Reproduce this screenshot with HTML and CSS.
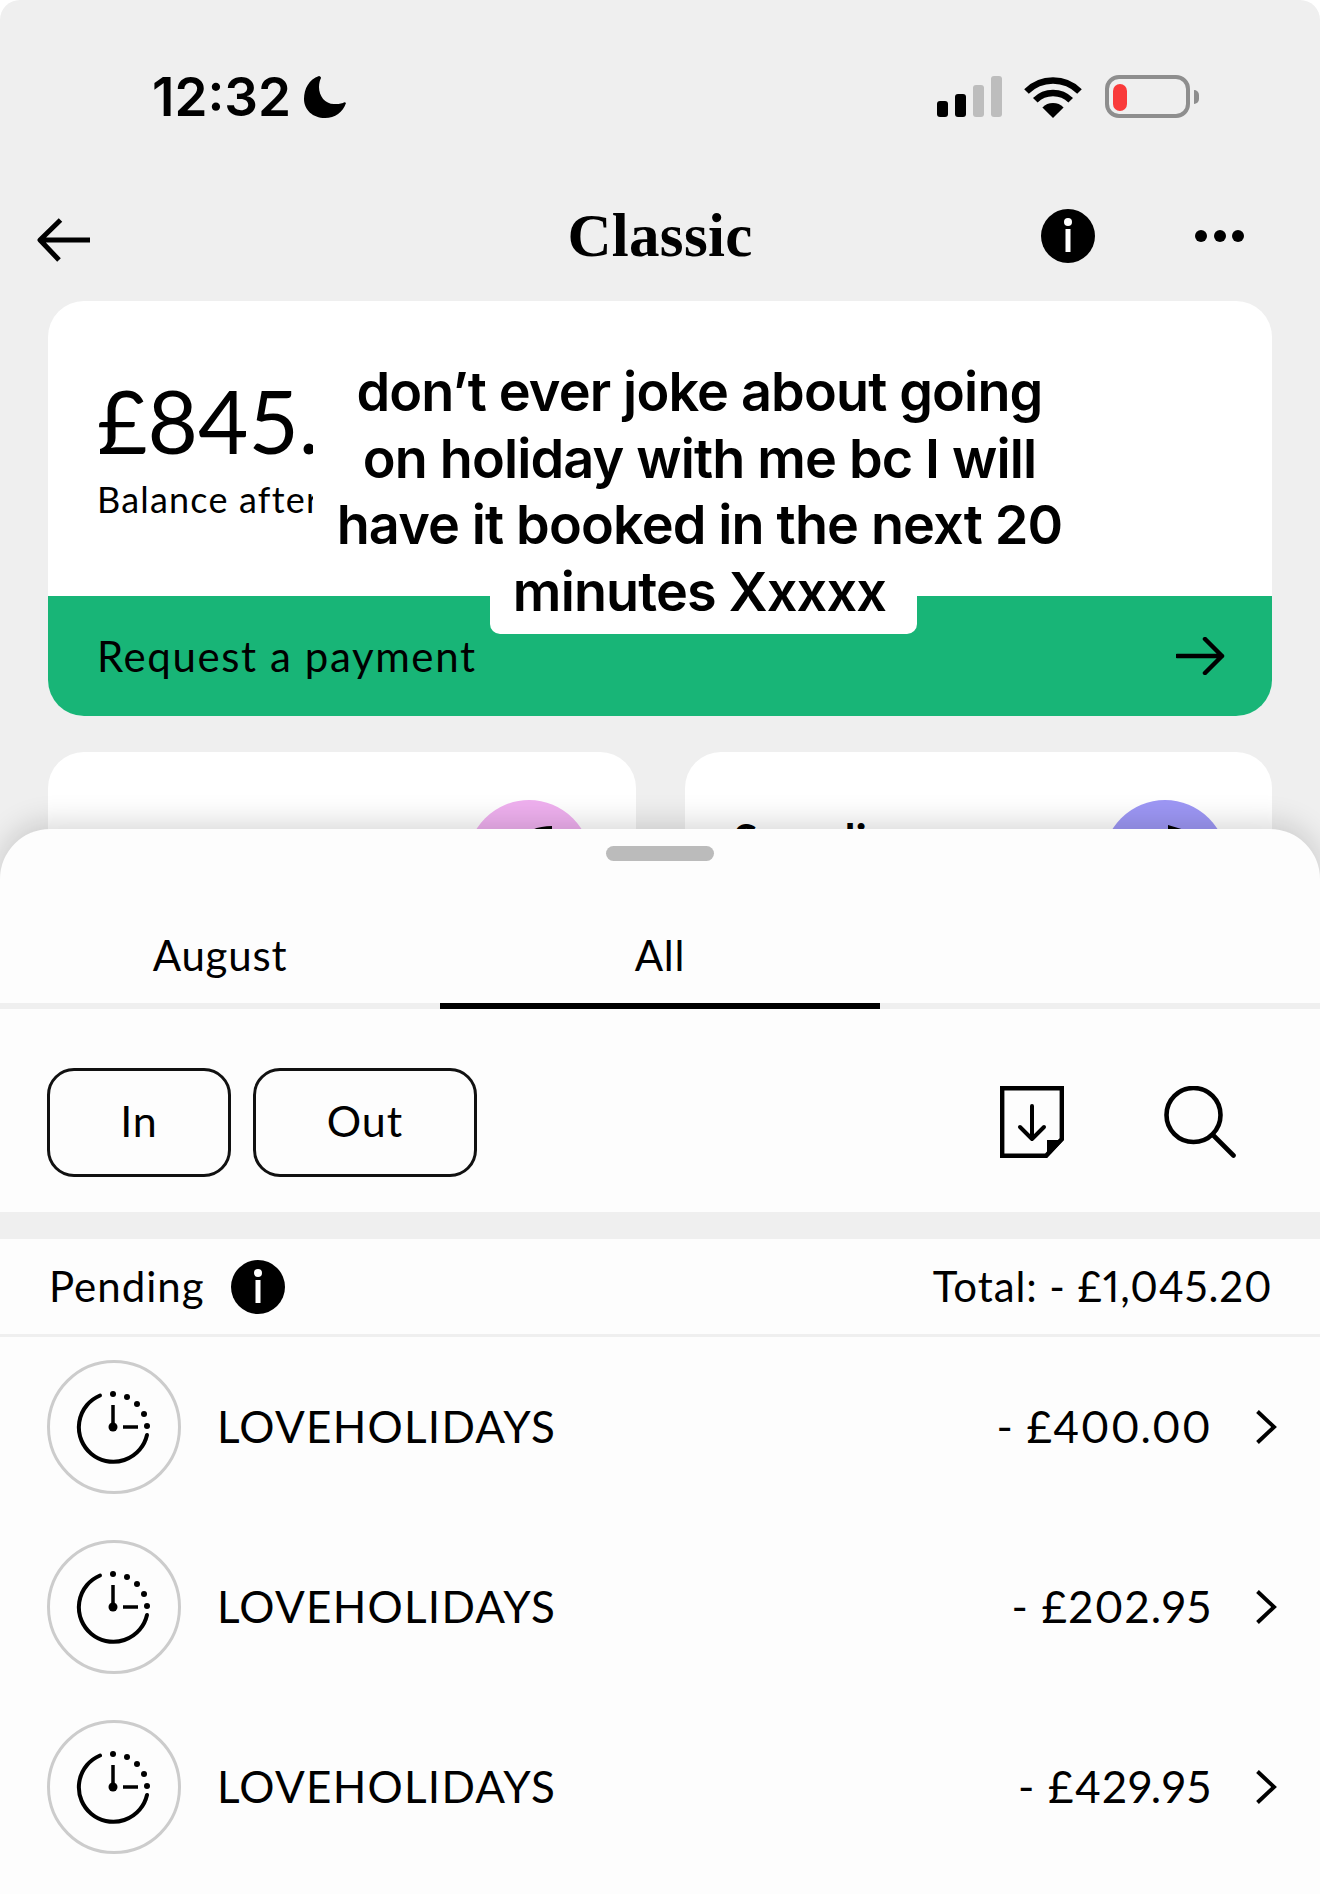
FILE: index.html
```html
<!DOCTYPE html>
<html lang="en">
<head>
  <meta charset="UTF-8">
  <title>Classic</title>
  <link rel="stylesheet" href="styles.css">
</head>
<body>
  <svg class="defs" aria-hidden="true">
    <symbol id="info" viewBox="0 0 54 54">
      <circle cx="27" cy="27" r="27" fill="#000"/>
      <circle cx="27" cy="13" r="4" fill="#fff"/>
      <rect x="24.5" y="20" width="5" height="23" fill="#fff"/>
    </symbol>
    <symbol id="clock" viewBox="0 0 80 80">
      <path d="M26 8.5A34.5 34.5 0 1 0 73 48" fill="none" stroke="#000" stroke-width="4" stroke-linecap="round"/>
      <circle cx="39" cy="7" r="3"/>
      <circle cx="53" cy="10" r="3"/>
      <circle cx="63" cy="17" r="3"/>
      <circle cx="70" cy="27" r="3"/>
      <circle cx="73" cy="39" r="3"/>
      <path d="M39 18V40M49 40H64" stroke="#000" stroke-width="3.5"/>
      <circle cx="39" cy="40" r="4.5"/>
    </symbol>
    <symbol id="chevron" viewBox="0 0 22 36">
      <path d="M2.5 2.5L19 18L2.5 33.5" fill="none" stroke="#000" stroke-width="4"/>
    </symbol>
  </svg>

  <div class="page">
    <div class="status">
      <span class="time">12:32</span>
      <svg class="moon" width="42" height="42" viewBox="0 0 42 42"><path d="M15 0C5 3 0 13 0 23C0 34 9 42 21 42C31 42 39 36 42 27C41 26 40 26 39 27C36 28 33 28 30 28C21 28 15 20 15 11C15 7 16 4 17 2C17 1 16 0 15 0Z"/></svg>
      <div class="signal">
        <i class="bar on b1"></i><i class="bar on b2"></i><i class="bar b3"></i><i class="bar b4"></i>
      </div>
      <svg class="wifi" width="58" height="42" viewBox="0 0 58 42">
        <path d="M29 42L18.4 31.4A15 15 0 0 1 39.6 31.4Z"/>
        <path d="M11.3 24.3A25 25 0 0 1 46.7 24.3M2.5 15.5A37.5 37.5 0 0 1 55.5 15.5" fill="none" stroke="#000" stroke-width="6.5"/>
      </svg>
      <div class="battery"><i class="level"></i></div>
      <i class="nub"></i>
    </div>

    <div class="header">
      <div class="header-left">
        <svg class="back" width="53" height="44" viewBox="0 0 53 44"><path d="M53 22H3M23.5 2L3 22L22 42" fill="none" stroke="#000" stroke-width="5" stroke-linejoin="round"/></svg>
      </div>
      <h1>Classic</h1>
      <div class="header-right">
        <svg class="icon-info"><use href="#info"/></svg>
        <div class="dots"><i></i><i></i><i></i></div>
      </div>
    </div>

    <div class="balance-card">
      <div class="balance-top">
        <div class="amount">£845.</div>
        <div class="amount-label">Balance after</div>
      </div>
      <div class="request">
        <span>Request a payment</span>
        <svg width="49" height="38" viewBox="0 0 49 38"><path d="M1 19H46M29 2L46 19L29 36" fill="none" stroke="#000" stroke-width="4.5" stroke-linecap="round" stroke-linejoin="round"/></svg>
      </div>
    </div>

    <div class="mini-cards">
      <div class="mini-card">
        <span></span>
        <div class="bubble pink">
          <svg width="124" height="124" viewBox="0 0 124 124"><path d="M65 30C71 27 78 26 85 26V40H65Z"/></svg>
        </div>
      </div>
      <div class="mini-card">
        <span class="mini-title">Spending</span>
        <div class="bubble purple">
          <svg width="124" height="124" viewBox="0 0 124 124"><path d="M65 25L85 31V40H65Z"/></svg>
        </div>
      </div>
    </div>

    <div class="caption">
      <div class="caption-main">don’t ever joke about going<br>on holiday with me bc I will<br>have it booked in the next 20</div>
      <div class="caption-last">minutes Xxxxx</div>
    </div>

    <div class="sheet">
      <div class="handle"></div>
      <div class="tabs">
        <div class="tab">August</div>
        <div class="tab active">All</div>
        <div class="tab"></div>
      </div>
      <div class="filters">
        <button class="pill pill-in">In</button>
        <button class="pill pill-out">Out</button>
        <div class="tools">
          <svg width="64" height="72" viewBox="0 0 64 72">
            <path d="M2.2 2.2H61.8V53L46 69.8H2.2Z" fill="none" stroke="#000" stroke-width="4.4"/>
            <path d="M47 54H64L47 72Z"/>
            <path d="M32 20V53M20 41L32 53L44 41" fill="none" stroke="#000" stroke-width="4" stroke-linecap="round" stroke-linejoin="round"/>
          </svg>
          <svg width="72" height="72" viewBox="0 0 72 72">
            <circle cx="29.5" cy="29" r="27" fill="none" stroke="#000" stroke-width="4.6"/>
            <path d="M49 49L69.5 69.5" stroke="#000" stroke-width="4.6" stroke-linecap="round"/>
          </svg>
        </div>
      </div>
      <div class="band"></div>
      <div class="pending">
        <span>Pending</span>
        <svg class="icon-info"><use href="#info"/></svg>
        <span class="total">Total: - £1,045.20</span>
      </div>
      <div class="row">
        <div class="ring"><svg class="icon-clock"><use href="#clock"/></svg></div>
        <span class="merchant">LOVEHOLIDAYS</span>
        <span class="price">- £400.00</span>
        <svg class="icon-chevron"><use href="#chevron"/></svg>
      </div>
      <div class="row">
        <div class="ring"><svg class="icon-clock"><use href="#clock"/></svg></div>
        <span class="merchant">LOVEHOLIDAYS</span>
        <span class="price">- £202.95</span>
        <svg class="icon-chevron"><use href="#chevron"/></svg>
      </div>
      <div class="row">
        <div class="ring"><svg class="icon-clock"><use href="#clock"/></svg></div>
        <span class="merchant">LOVEHOLIDAYS</span>
        <span class="price">- £429.95</span>
        <svg class="icon-chevron"><use href="#chevron"/></svg>
      </div>
    </div>
  </div>
</body>
</html>
```
FILE: styles.css
```css
* { box-sizing: border-box; }
body { margin: 0; background: #fff; font-family: Lato, "Open Sans", sans-serif; color: #000; }
.defs { position: absolute; width: 0; height: 0; }
.page { position: relative; width: 1320px; height: 1894px; overflow: hidden; background: #efefef; border-radius: 20px 20px 0 0; }

/* status bar */
.status { display: flex; align-items: center; height: 170px; padding: 23px 0 0 152px; }
.time { width: 152px; font-family: Inter, sans-serif; font-weight: 600; font-size: 53px; line-height: 60px; }
.signal { display: flex; align-items: flex-end; gap: 7px; height: 41px; margin-left: 591px; }
.bar { display: block; width: 11px; border-radius: 3px; background: #bdbdbd; }
.bar.on { background: #000; }
.b1 { height: 16px; }
.b2 { height: 23px; }
.b3 { height: 32px; }
.b4 { height: 41px; }
.wifi { margin-left: 22px; }
.battery { width: 85px; height: 43px; margin-left: 23px; padding: 5px 0 0 4px; border: 4px solid #8e8e8e; border-radius: 14px; }
.level { display: block; width: 14px; height: 27px; border-radius: 7px; background: #f93a3a; }
.nub { width: 5px; height: 14px; margin-left: 4px; border-radius: 0 6px 6px 0; background: #8e8e8e; }

/* header */
.header { display: grid; grid-template-columns: 1fr auto 1fr; align-items: center; height: 131px; }
.header-left { display: flex; padding-left: 37px; }
.back { margin-top: 9px; }
h1 { margin: 0; font-family: "Liberation Serif", serif; font-weight: 700; font-size: 61px; line-height: 70px; letter-spacing: .3px; }
.header-right { display: flex; align-items: center; justify-content: flex-end; gap: 100px; padding-right: 76px; }
.icon-info { width: 54px; height: 54px; flex: none; }
.dots { display: flex; gap: 6.5px; }
.dots i { display: block; width: 12px; height: 12px; border-radius: 50%; background: #000; }

/* balance */
.balance-card { height: 415px; margin: 0 48px; border-radius: 36px; overflow: hidden; background: #fff; }
.balance-top { width: 265px; height: 295px; padding: 70px 0 0 49px; white-space: nowrap; overflow: hidden; }
.amount { font-size: 87px; line-height: 100px; }
.amount-label { margin-top: 7px; font-size: 36px; line-height: 42px; letter-spacing: 1.2px; }
.request { display: flex; align-items: center; justify-content: space-between; height: 120px; padding: 0 47px 0 49px; background: #18b577; font-size: 42px; letter-spacing: 1.6px; }

.mini-cards { display: flex; gap: 49px; margin: 36px 48px 0; }
.mini-card { display: flex; justify-content: space-between; flex: 1; height: 300px; padding: 48px 45px 0 49px; border-radius: 36px; background: #fff; }
.mini-title { margin-top: 15px; font-size: 44px; line-height: 48px; font-weight: 700; }
.bubble { width: 124px; height: 124px; border-radius: 50%; }
.pink { background: #efb0ef; }
.purple { background: #9d97f5; }

/* caption sticker over the card */
.caption { position: absolute; left: 313px; top: 350px; width: 780px; font-family: Inter, sans-serif; font-weight: 600; font-size: 54px; line-height: 66.5px; letter-spacing: -.85px; text-align: center; }
.caption-main { padding: 9px 7px 0 0; background: #fff; }
.caption-last { width: 427px; margin: 0 auto; padding: 0 7px 9px 0; border-radius: 0 0 10px 10px; background: #fff; }

/* bottom sheet */
.sheet { position: absolute; left: 0; right: 0; top: 829px; bottom: 0; border-radius: 50px 50px 0 0; background: #fdfdfd; box-shadow: 0 -6px 30px rgba(0, 0, 0, .16); }
.handle { width: 108px; height: 15px; margin: 17px auto 0; border-radius: 8px; background: #bbb; }
.tabs { display: flex; height: 148px; }
.tab { flex: 1; padding-top: 70px; border-bottom: 6px solid #efefef; font-size: 42px; line-height: 48px; text-align: center; letter-spacing: .8px; }
.tab.active { border-bottom-color: #000; }
.filters { display: flex; align-items: center; gap: 22px; height: 203px; padding: 23px 84px 0 47px; }
.pill { height: 109px; padding-bottom: 4px; border: 3px solid #111; border-radius: 27px; background: none; font: inherit; font-size: 43px; letter-spacing: 1px; color: #000; }
.pill-in { width: 184px; }
.pill-out { width: 224px; }
.tools { display: flex; align-items: center; gap: 100px; margin-left: auto; }
.band { height: 27px; background: #efefef; }
.pending { display: flex; align-items: center; height: 98px; padding: 0 47.5px 0 49px; border-bottom: 3px solid #efefef; font-size: 42px; letter-spacing: 1px; }
.pending span { padding-bottom: 2px; }
.pending .icon-info { margin-left: 26px; }
.total { margin-left: auto; letter-spacing: .9px; font-variant-numeric: proportional-nums; }
.row { display: flex; align-items: center; height: 180px; padding: 0 43px 0 47px; }
.ring { display: flex; align-items: center; justify-content: center; width: 134px; height: 134px; border: 3.5px solid #ccc; border-radius: 50%; }
.icon-clock { width: 80px; height: 80px; }
.merchant { margin-left: 36px; padding-bottom: 2px; font-size: 44px; letter-spacing: 1.25px; }
.price { margin-left: auto; padding-bottom: 2px; font-size: 44px; letter-spacing: 1.2px; font-variant-numeric: proportional-nums; }
.icon-chevron { width: 22px; height: 36px; margin-left: 43px; }
```
